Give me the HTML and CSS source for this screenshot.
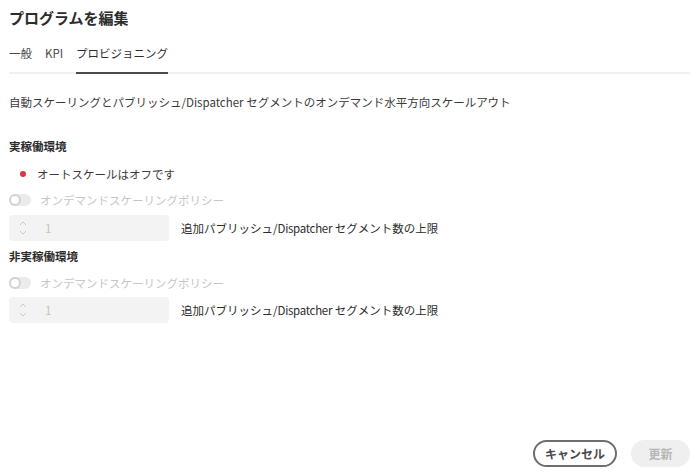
FILE: index.html
```html
<!DOCTYPE html>
<html lang="ja">
<head>
<meta charset="utf-8">
<link rel="stylesheet" href="styles.css">
</head>
<body>
<div class="page">
  <h1 class="title">プログラムを編集</h1>
  <div class="tabs">
    <div class="tab">一般</div>
    <div class="tab">KPI</div>
    <div class="tab active">プロビジョニング</div>
  </div>
  <p class="desc">自動スケーリングとパブリッシュ/Dispatcher セグメントのオンデマンド水平方向スケールアウト</p>

  <h2 class="heading first">実稼働環境</h2>
  <div class="status"><span class="dot"></span>オートスケールはオフです</div>
  <div class="switch-row"><span class="switch"><span class="knob"></span></span><span class="switch-label">オンデマンドスケーリングポリシー</span></div>
  <div class="field-row">
    <div class="stepper">
      <span class="arrows">
        <svg width="8" height="5" viewBox="0 0 8 5"><path d="M1 4 L4 1 L7 4" fill="none" stroke="#c9c9c9" stroke-width="1"/></svg>
        <svg width="8" height="5" viewBox="0 0 8 5"><path d="M1 1 L4 4 L7 1" fill="none" stroke="#c9c9c9" stroke-width="1"/></svg>
      </span>
      <span class="value">1</span>
    </div>
    <span class="field-label">追加パブリッシュ/<span class="latin">Dispatcher</span> セグメント数の上限</span>
  </div>

  <h2 class="heading second">非実稼働環境</h2>
  <div class="switch-row r2"><span class="switch"><span class="knob"></span></span><span class="switch-label">オンデマンドスケーリングポリシー</span></div>
  <div class="field-row r2">
    <div class="stepper">
      <span class="arrows">
        <svg width="8" height="5" viewBox="0 0 8 5"><path d="M1 4 L4 1 L7 4" fill="none" stroke="#c9c9c9" stroke-width="1"/></svg>
        <svg width="8" height="5" viewBox="0 0 8 5"><path d="M1 1 L4 4 L7 1" fill="none" stroke="#c9c9c9" stroke-width="1"/></svg>
      </span>
      <span class="value">1</span>
    </div>
    <span class="field-label">追加パブリッシュ/<span class="latin">Dispatcher</span> セグメント数の上限</span>
  </div>

  <div class="footer">
    <button class="btn cancel">キャンセル</button>
    <button class="btn update">更新</button>
  </div>
</div>
</body>
</html>
```
FILE: styles.css
```css
html, body {
  margin: 0;
  padding: 0;
  background: #ffffff;
}
body {
  font-family: "Noto Sans CJK JP", "Noto Sans", sans-serif;
  color: #2c2c2c;
}
.page {
  box-sizing: border-box;
  height: 474px;
  padding: 8px 4px 7px 9px;
  display: flex;
  flex-direction: column;
}
.title {
  margin: 0;
  font-size: 15px;
  line-height: 20px;
  font-weight: 700;
  color: #2c2c2c;
}
.tabs {
  margin-top: 15px;
  display: flex;
  gap: 13px;
  border-bottom: 2px solid #f0f0f0;
}
.tab {
  font-size: 11.5px;
  line-height: 20px;
  padding-bottom: 9px;
  color: #4b4b4b;
  margin-bottom: -2px;
  border-bottom: 2px solid transparent;
}
.tab.active {
  border-bottom-color: #4b4b4b;
  color: #2c2c2c;
}
.desc {
  margin: 18px 0 0;
  font-size: 11.5px;
  line-height: 20px;
  color: #3a3a3a;
}
.heading {
  margin: 0;
  font-size: 11.5px;
  line-height: 20px;
  font-weight: 700;
  color: #2c2c2c;
}
.heading.first { margin-top: 24px; }
.heading.second { margin-top: 5px; }
.status {
  margin-top: 8px;
  display: flex;
  align-items: center;
  font-size: 11.5px;
  line-height: 20px;
  color: #3a3a3a;
  padding-left: 11px;
}
.dot {
  width: 6px;
  height: 6px;
  border-radius: 50%;
  background: #d7373f;
  margin-right: 11px;
}
.switch-row {
  margin-top: 6px;
  display: flex;
  align-items: center;
  font-size: 11.5px;
  line-height: 20px;
}
.switch-row.r2 { margin-top: 7px; }
.switch {
  box-sizing: border-box;
  width: 22px;
  height: 12px;
  border-radius: 6px;
  background: #ebebeb;
  display: flex;
  align-items: center;
  margin-right: 9px;
}
.knob {
  box-sizing: border-box;
  width: 12px;
  height: 12px;
  border-radius: 50%;
  background: #ffffff;
  border: 2px solid #d2d2d2;
}
.switch-label {
  color: #c6c6c6;
}
.field-row {
  margin-top: 5px;
  display: flex;
  align-items: center;
}
.field-row.r2 { margin-top: 4px; }
.stepper {
  box-sizing: border-box;
  width: 160px;
  height: 26px;
  border-radius: 4px;
  background: #f3f3f3;
  display: flex;
  align-items: center;
  padding-left: 10px;
}
.arrows {
  display: flex;
  flex-direction: column;
  gap: 4px;
  width: 8px;
}
.arrows svg { display: block; }
.value {
  margin-left: 18px;
  font-size: 11.5px;
  color: #c3c3c3;
}
.field-label {
  margin-left: 12px;
  font-size: 11.5px;
  line-height: 20px;
  color: #2c2c2c;
}
.latin {
  letter-spacing: -0.3px;
}
.footer {
  margin-top: auto;
  display: flex;
  justify-content: flex-end;
  gap: 14px;
}
.btn {
  font-family: "Noto Sans CJK JP", "Noto Sans", sans-serif;
  box-sizing: border-box;
  height: 27px;
  border-radius: 14px;
  font-size: 12px;
  font-weight: 700;
  padding: 0;
  cursor: pointer;
}
.cancel {
  width: 84px;
  background: #ffffff;
  border: 2px solid #6e6e6e;
  color: #4b4b4b;
}
.update {
  width: 59px;
  background: #efefef;
  border: none;
  color: #b6b6b6;
}
```
